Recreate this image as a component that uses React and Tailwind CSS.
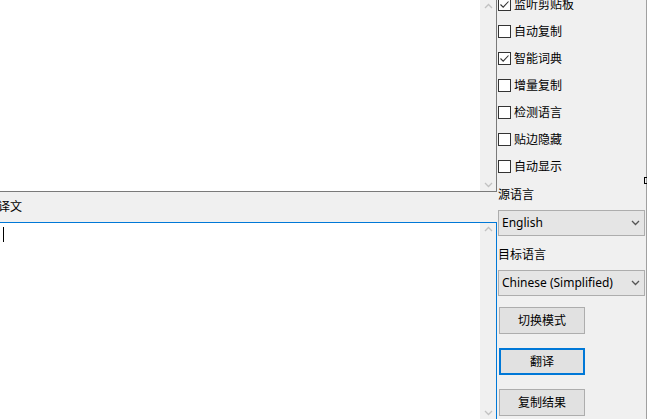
import React from "react";

const cjk = { fontFamily: '"Noto Sans", "Noto Sans CJK SC", sans-serif' };

const Chevron = ({ up, className }) => (
    <svg width="9" height="6" viewBox="0 0 9 6" className={className}>
        <path
            d={up ? "M1 5 L4.5 1.5 L8 5" : "M1 1 L4.5 4.5 L8 1"}
            stroke="currentColor"
            strokeWidth="1.3"
            fill="none"
        />
    </svg>
);

const ScrollBar = () => (
    <div className="w-[16px] h-full bg-[#f0f0f0] flex flex-col justify-between items-center py-[3px] text-[#c2c2c2]">
        <Chevron up />
        <Chevron />
    </div>
);

const CheckBox = ({ checked, label }) => (
    <div className="flex items-center h-[13px] gap-[3px]">
        <div className="w-[13px] h-[13px] border border-[#333333] bg-white flex items-center justify-center">
            {checked && (
                <svg width="11" height="11" viewBox="0 0 11 11">
                    <path d="M1.5 5.5 L4.2 8.2 L9.5 2.5" stroke="#333333" strokeWidth="1.1" fill="none" />
                </svg>
            )}
        </div>
        <span className="text-[12px] leading-[16px] text-black whitespace-nowrap">{label}</span>
    </div>
);

const Select = ({ value }) => (
    <div className="h-[26px] w-[147px] bg-[#e5e5e5] border border-[#adadad] flex items-center justify-between pl-[3px] pr-[4px]">
        <span className="text-[12px] text-black whitespace-nowrap">{value}</span>
        <Chevron className="text-[#555555]" />
    </div>
);

const Button = ({ label, focused }) => (
    <div
        className={`w-[86px] h-[27px] bg-[#e1e1e1] flex items-center justify-center text-[12px] text-black ${
            focused ? "border-2 border-[#0078d7]" : "border border-[#adadad]"
        }`}
    >
        {label}
    </div>
);

export default function App() {
    const options = [
        ["监听剪贴板", true],
        ["自动复制", false],
        ["智能词典", true],
        ["增量复制", false],
        ["检测语言", false],
        ["贴边隐藏", false],
        ["自动显示", false],
    ];

    return (
        <div className="w-[647px] h-[419px] flex overflow-hidden bg-[#f0f0f0]" style={cjk}>
            {/* left: source box, header, result box */}
            <div className="w-[497px] h-full flex flex-col">
                <div className="h-[192px] flex border-b border-r border-[#7a7a7a]">
                    <div className="flex-1 bg-white" />
                    <ScrollBar />
                </div>
                <div className="h-[30px] bg-[#f0f0f0] flex items-center">
                    <span className="text-[12px] text-black ml-[-2px]">译文</span>
                </div>
                <div className="flex-1 flex border-t border-r border-[#0078d7]">
                    <div className="flex-1 bg-white pl-[3px] pt-[4px]">
                        <div className="w-[1px] h-[15px] bg-black" />
                    </div>
                    <ScrollBar />
                </div>
            </div>

            {/* right: options panel */}
            <div className="relative flex-1 h-full flex flex-col pl-[1px] border-r border-[#a0a0a0]">
                <div className="flex flex-col gap-[14px] mt-[-2px]">
                    {options.map(([label, checked]) => (
                        <CheckBox key={label} label={label} checked={checked} />
                    ))}
                </div>
                <div className="mt-[14px] text-[12px] leading-[16px] text-black">源语言</div>
                <div className="mt-[7px]">
                    <Select value="English" />
                </div>
                <div className="mt-[11px] text-[12px] leading-[16px] text-black">目标语言</div>
                <div className="mt-[7px]">
                    <Select value="Chinese (Simplified)" />
                </div>
                <div className="mt-[11px] pl-[1px]">
                    <Button label="切换模式" />
                </div>
                <div className="mt-[14px] pl-[1px]">
                    <Button label="翻译" focused />
                </div>
                <div className="mt-[14px] pl-[1px]">
                    <Button label="复制结果" />
                </div>
                <div className="absolute right-[-1px] top-[177px] w-[3px] h-[7px] border border-black border-r-0" />
            </div>
        </div>
    );
}
